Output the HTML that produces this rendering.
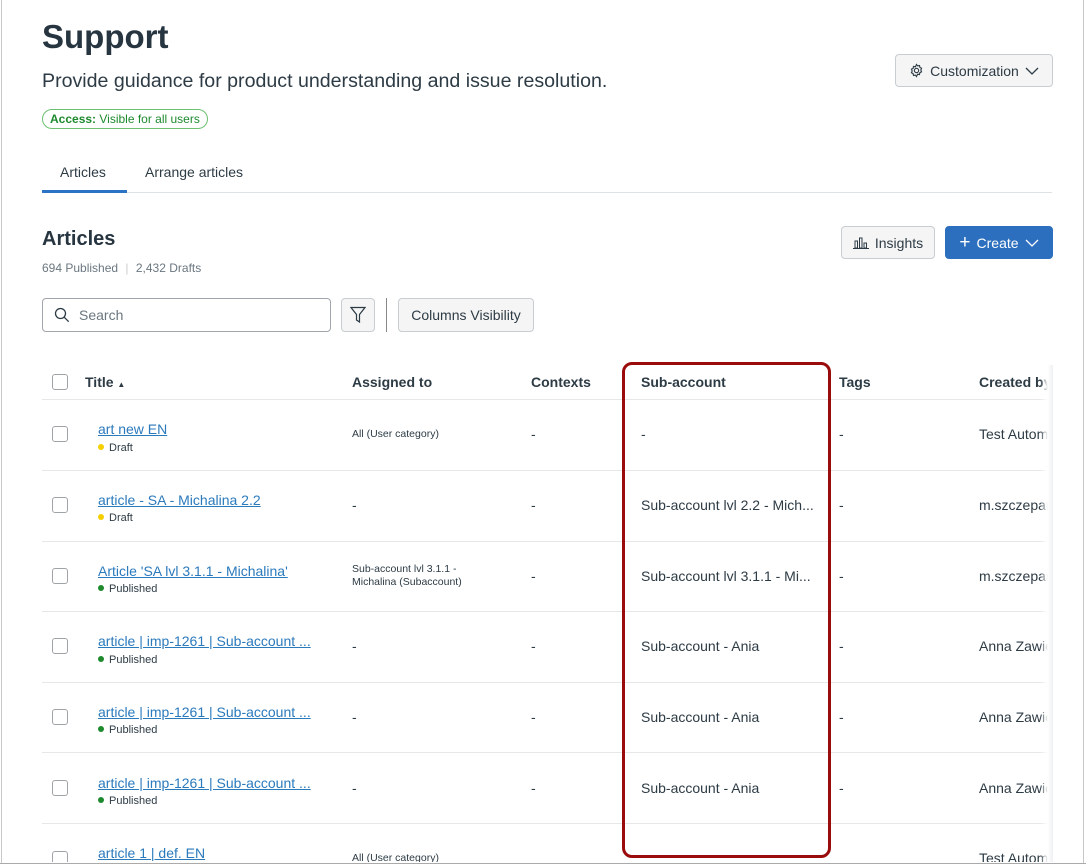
<!DOCTYPE html>
<html><head><meta charset="utf-8"><style>
*{box-sizing:border-box;margin:0;padding:0}
body{width:1086px;height:867px;background:#fff;font-family:"Liberation Sans",sans-serif;color:#2d3b45;position:relative;overflow:hidden}
.frame{position:absolute;left:0;top:0;width:1086px;height:867px;overflow:hidden}
.a{position:absolute;white-space:nowrap}
.btn{position:absolute;border:1px solid #c7cdd1;background:#f5f5f5;border-radius:4px;font-size:14px;color:#2d3b45;display:flex;align-items:center;justify-content:center}
.cb{position:absolute;left:52px;width:16px;height:16px;border:1px solid #a0a4a8;border-radius:3px;background:#fff}
.hd{font-size:14px;font-weight:bold;color:#2d3b45;top:374px}
.line{position:absolute;left:42px;width:1010px;height:1px;background:#e5e7e9}
.lk{font-size:14px;color:#2b7abc;text-decoration:underline;left:98px}
.st{font-size:11px;color:#2d3b45;left:98px}
.st i{display:inline-block;width:6px;height:6px;border-radius:50%;margin-right:5px;vertical-align:1px}
.c{font-size:14px;color:#2d3b45}
.s{font-size:10.5px;color:#2d3b45;line-height:13px}
</style></head><body><div class="frame">
<div class="a" style="left:42px;top:18px;font-size:33px;font-weight:bold;color:#273540">Support</div>
<div class="a" style="left:42px;top:70px;font-size:19.6px;color:#2d3b45">Provide guidance for product understanding and issue resolution.</div>
<div class="a" style="left:42px;top:109px;height:20px;padding:0 7px;border:1px solid #6cc070;border-radius:10px;font-size:12px;line-height:18px;color:#1e8a2e"><b>Access:</b> Visible for all users</div>
<div class="btn" style="left:895px;top:54px;width:158px;height:33px;gap:6px"><svg width="15" height="15" viewBox="0 0 16 16" fill="none" stroke="#2d3b45" stroke-width="1.2"><circle cx="8" cy="8" r="2.3"/><path d="M8 1.5l1.2 1.6 2-.4.4 2 1.8.9-.8 1.9.8 1.9-1.8.9-.4 2-2-.4L8 14.5l-1.2-1.6-2 .4-.4-2-1.8-.9.8-1.9-.8-1.9 1.8-.9.4-2 2 .4z"/></svg>Customization <svg width="14" height="10" viewBox="0 0 14 10" fill="none" stroke="#2d3b45" stroke-width="1.3"><path d="M1 2l6 6 6-6"/></svg></div>
<div class="a" style="left:60px;top:164px;font-size:14px">Articles</div>
<div class="a" style="left:145px;top:164px;font-size:14px">Arrange articles</div>
<div style="position:absolute;left:42px;top:192px;width:1010px;height:1px;background:#dfe2e4"></div>
<div style="position:absolute;left:42px;top:190px;width:85px;height:3px;background:#2b73c4"></div>
<div class="a" style="left:42px;top:228px;font-size:20px;font-weight:bold;color:#273540">Articles</div>
<div class="a" style="left:42px;top:261px;font-size:12px;color:#6b7780">694 Published <span style="color:#ccc;margin:0 4px">|</span> 2,432 Drafts</div>
<div class="btn" style="left:841px;top:226px;width:94px;height:33px;gap:6px"><svg width="16" height="12" viewBox="0 0 16 12" fill="none" stroke="#2d3b45" stroke-width="1"><rect x="2" y="4" width="2.5" height="7"/><rect x="6.5" y="1" width="2.5" height="10"/><rect x="11" y="6" width="2.5" height="5"/><path d="M0 11.5h16"/></svg>Insights</div>
<div class="btn" style="left:945px;top:226px;width:108px;height:33px;background:#2b6fbe;border-color:#2b6fbe;color:#fff;gap:6px"><span style="font-size:19px;line-height:1">+</span>Create <svg width="14" height="10" viewBox="0 0 14 10" fill="none" stroke="#fff" stroke-width="1.3"><path d="M1 2l6 6 6-6"/></svg></div>
<div style="position:absolute;left:42px;top:298px;width:289px;height:34px;border:1px solid #a0a6ab;border-radius:4px"></div>
<svg style="position:absolute;left:54px;top:307px" width="16" height="16" viewBox="0 0 16 16" fill="none" stroke="#2d3b45" stroke-width="1.3"><circle cx="6.5" cy="6.5" r="5"/><path d="M10.2 10.2l4.5 4.5"/></svg>
<div class="a" style="left:79px;top:307px;font-size:14px;color:#6b7780">Search</div>
<div class="btn" style="left:341px;top:298px;width:34px;height:34px"><svg width="16" height="18" viewBox="0 0 16 18" fill="none" stroke="#2d3b45" stroke-width="1.2"><path d="M1 1.5h14l-5.5 7v7.5l-3-2v-5.5z"/></svg></div>
<div style="position:absolute;left:386px;top:298px;width:1px;height:34px;background:#888"></div>
<div class="btn" style="left:398px;top:298px;width:136px;height:34px">Columns Visibility</div>

<div class="cb" style="top:374px"></div>
<div class="a hd" style="left:85px">Title <span style="font-size:8px">▲</span></div>
<div class="a hd" style="left:352px">Assigned to</div>
<div class="a hd" style="left:531px">Contexts</div>
<div class="a hd" style="left:641px">Sub-account</div>
<div class="a hd" style="left:839px">Tags</div>
<div class="a hd" style="left:979px">Created by</div>

<div class="line" style="top:399px"></div><div class="line" style="top:470px"></div><div class="line" style="top:541px"></div><div class="line" style="top:611px"></div><div class="line" style="top:682px"></div><div class="line" style="top:752px"></div><div class="line" style="top:823px"></div>

<div class="cb" style="top:426px"></div><div class="a lk" style="top:421px">art new EN</div><div class="a st" style="top:442px"><i style="background:#f5cf00"></i>Draft</div>
<div class="a s" style="left:352px;top:428px">All (User category)</div><div class="a c" style="left:531px;top:426px">-</div><div class="a c" style="left:641px;top:426px">-</div><div class="a c" style="left:839px;top:426px">-</div><div class="a c" style="left:979px;top:426px">Test Automa</div>

<div class="cb" style="top:497px"></div><div class="a lk" style="top:492px">article - SA - Michalina 2.2</div><div class="a st" style="top:512px"><i style="background:#f5cf00"></i>Draft</div>
<div class="a c" style="left:352px;top:497px">-</div><div class="a c" style="left:531px;top:497px">-</div><div class="a c" style="left:641px;top:497px">Sub-account lvl 2.2 - Mich...</div><div class="a c" style="left:839px;top:497px">-</div><div class="a c" style="left:979px;top:497px">m.szczepan</div>

<div class="cb" style="top:568px"></div><div class="a lk" style="top:563px">Article 'SA lvl 3.1.1 - Michalina'</div><div class="a st" style="top:583px"><i style="background:#1e8a2e"></i>Published</div>
<div class="a s" style="left:352px;top:563px">Sub-account lvl 3.1.1 -<br>Michalina (Subaccount)</div><div class="a c" style="left:531px;top:568px">-</div><div class="a c" style="left:641px;top:568px">Sub-account lvl 3.1.1 - Mi...</div><div class="a c" style="left:839px;top:568px">-</div><div class="a c" style="left:979px;top:568px">m.szczepan</div>

<div class="cb" style="top:638px"></div><div class="a lk" style="top:633px">article | imp-1261 | Sub-account ...</div><div class="a st" style="top:654px"><i style="background:#1e8a2e"></i>Published</div>
<div class="a c" style="left:352px;top:638px">-</div><div class="a c" style="left:531px;top:638px">-</div><div class="a c" style="left:641px;top:638px">Sub-account - Ania</div><div class="a c" style="left:839px;top:638px">-</div><div class="a c" style="left:979px;top:638px">Anna Zawie</div>

<div class="cb" style="top:709px"></div><div class="a lk" style="top:704px">article | imp-1261 | Sub-account ...</div><div class="a st" style="top:724px"><i style="background:#1e8a2e"></i>Published</div>
<div class="a c" style="left:352px;top:709px">-</div><div class="a c" style="left:531px;top:709px">-</div><div class="a c" style="left:641px;top:709px">Sub-account - Ania</div><div class="a c" style="left:839px;top:709px">-</div><div class="a c" style="left:979px;top:709px">Anna Zawie</div>

<div class="cb" style="top:780px"></div><div class="a lk" style="top:775px">article | imp-1261 | Sub-account ...</div><div class="a st" style="top:795px"><i style="background:#1e8a2e"></i>Published</div>
<div class="a c" style="left:352px;top:780px">-</div><div class="a c" style="left:531px;top:780px">-</div><div class="a c" style="left:641px;top:780px">Sub-account - Ania</div><div class="a c" style="left:839px;top:780px">-</div><div class="a c" style="left:979px;top:780px">Anna Zawie</div>

<div class="cb" style="top:851px"></div><div class="a lk" style="top:845px">article 1 | def. EN</div>
<div class="a s" style="left:352px;top:852px">All (User category)</div><div class="a c" style="left:979px;top:850px">Test Autom</div>

<div style="position:absolute;left:1040px;top:365px;width:13px;height:500px;background:linear-gradient(to right,rgba(255,255,255,0),#fff 60%,#eef0f2)"></div>
<div style="position:absolute;left:1053px;top:365px;width:33px;height:500px;background:#fff"></div>
<div style="position:absolute;left:0;top:862px;width:1086px;height:5px;background:#fff"></div>
<div style="position:absolute;left:622px;top:362px;width:209px;height:496px;border:3px solid #9a0c0c;border-radius:10px"></div>
</div>
<div style="position:absolute;left:1px;top:0;width:1px;height:864px;background:#c8c8c8"></div>
<div style="position:absolute;left:1083px;top:0;width:1px;height:864px;background:#c8c8c8"></div>
<div style="position:absolute;left:0;top:863px;width:1086px;height:1px;background:#aaa"></div>
</body></html>
